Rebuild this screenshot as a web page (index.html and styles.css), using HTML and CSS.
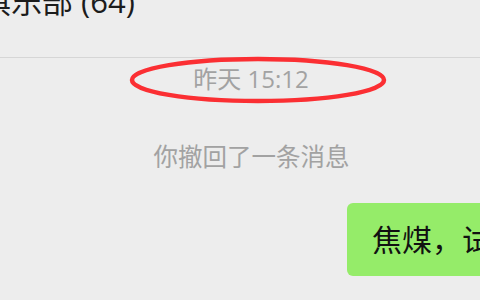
FILE: index.html
```html
<!DOCTYPE html>
<html lang="zh-CN">
<head>
  <meta charset="UTF-8">
  <title>聊天</title>
  <link rel="stylesheet" href="styles.css">
</head>
<body>

<div id="chat">
  <div class="title-bar">
    <div class="title">俱乐部 (64)</div>
  </div>

  <div class="messages">
    <div class="time">
      <span>昨天 15:12</span>
      <svg class="mark" width="266" height="52" viewBox="0 0 266 52">
        <ellipse cx="133" cy="26" rx="126" ry="21" fill="none" stroke="#fb2f33" stroke-width="4.5"/>
      </svg>
    </div>
    <div class="notice">你撤回了一条消息</div>
    <div class="row mine">
      <div class="bubble">焦煤，试试看吧</div>
    </div>
  </div>
</div>

</body>
</html>
```

FILE: styles.css
```css
body{
  margin: 0;
  background: #ededed;
  font-family: "Open Sans", "Noto Sans CJK SC", sans-serif;
}
#chat{
  width: 480px;
  height: 300px;
  overflow: hidden;
}
.title-bar{
  height: 57px;
  border-bottom: 1px solid #d6d6d6;
  overflow: hidden;
}
.title{
  margin: -21px 0 0 -20px;
  font-size: 31px;
  line-height: 44px;
  color: #1c1c1c;
  white-space: nowrap;
}
.messages{
  display: flex;
  flex-direction: column;
}
.time{
  position: relative;
  margin-top: 7px;
  text-align: center;
  font-size: 24px;
  line-height: 28px;
  color: #a2a2a2;
  padding-left: 22px;
}
.mark{
  position: absolute;
  left: 125px;
  top: -11px;
}
.notice{
  margin-top: 50px;
  text-align: center;
  font-size: 24.5px;
  line-height: 28px;
  color: #a2a2a2;
  padding-left: 23px;
}
.row{
  display: flex;
  margin-top: 32px;
}
.mine{
  padding-left: 347px;
}
.bubble{
  height: 73px;
  padding-left: 25px;
  background: #95ec69;
  border-radius: 6px;
  font-size: 30px;
  line-height: 73px;
  color: #111;
  white-space: nowrap;
}
```
